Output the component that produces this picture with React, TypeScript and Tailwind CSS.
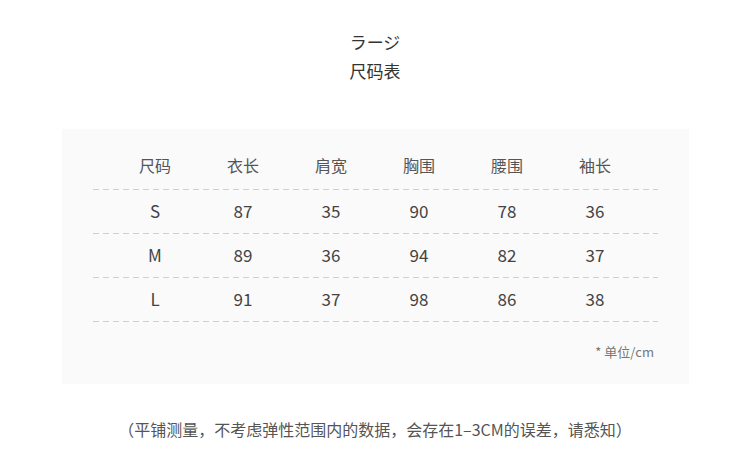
const headers = ['尺码', '衣长', '肩宽', '胸围', '腰围', '袖长']

const rows = [
  ['S', '87', '35', '90', '78', '36'],
  ['M', '89', '36', '94', '82', '37'],
  ['L', '91', '37', '98', '86', '38'],
]

function Dash() {
  return (
    <div className="h-px w-full bg-[repeating-linear-gradient(to_right,#cfcfcf_0_6px,transparent_6px_10px)]" />
  )
}

function Row({ cells, head }: { cells: string[]; head?: boolean }) {
  return (
    <>
      <div
        className={`grid h-[43px] grid-cols-[repeat(6,88px)] items-center pl-[18px] ${head ? 'pb-[5px]' : 'pb-[2px]'}`}
      >
        {cells.map((c, i) => (
          <div
            key={i}
            className={`text-center ${head ? 'text-[16px] text-[#555]' : 'text-[17px] text-[#444]'}`}
          >
            {c}
          </div>
        ))}
      </div>
      <Dash />
    </>
  )
}

export default function App() {
  return (
    <div className="h-[469px] w-[750px] bg-white font-['Noto_Sans_CJK_SC','Noto_Sans',sans-serif]">
      <div className="pt-[27px] text-center text-[17px] leading-[29px] text-[#333]">
        <div>ラージ</div>
        <div>尺码表</div>
      </div>

      <div className="ml-[62px] mt-[44px] h-[255px] w-[627px] bg-[#fafafa] px-[31px] pt-[17px]">
        <Row cells={headers} head />
        {rows.map((r) => (
          <Row key={r[0]} cells={r} />
        ))}
        <div className="mt-[22px] pr-[4px] text-right text-[13px] leading-4 text-[#777]">* 单位/cm</div>
      </div>

      <div className="mt-[35px] text-center text-[16px] leading-5 text-[#555]">
        （平铺测量，不考虑弹性范围内的数据，会存在1–3CM的误差，请悉知）
      </div>
    </div>
  )
}
